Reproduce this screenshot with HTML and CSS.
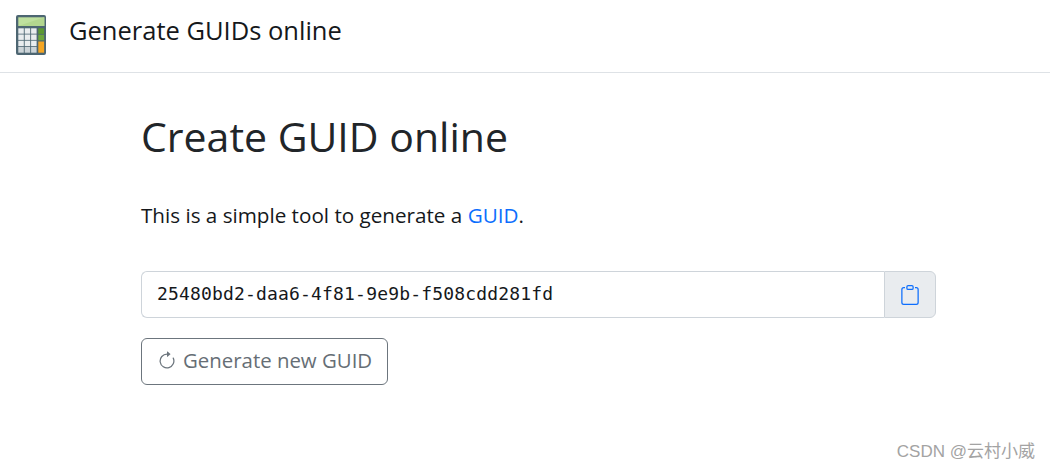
FILE: index.html
```html
<!DOCTYPE html>
<html lang="en">
<head>
  <title>Generate GUIDs online</title>
  <meta charset="UTF-8">
  <link rel="stylesheet" href="styles.css">
</head>
<body>
  <header class="topbar">
    <svg class="logo" viewBox="0 0 30 40" width="30" height="40">
      <rect x="0" y="0" width="30" height="40" rx="2" fill="#4d6672"/>
      <rect x="2.3" y="2.3" width="26" height="8.7" fill="#bfe09e"/>
      <path d="M2.3 11 L28.3 2.3 V11 Z" fill="#b3d78f"/>
      <g fill="#e9edef">
        <rect x="2.3" y="13.3" width="5.5" height="5.4"/><rect x="8.7" y="13.3" width="5.5" height="5.4"/><rect x="15.1" y="13.3" width="5.5" height="5.4"/>
        <rect x="2.3" y="19.5" width="5.5" height="5.4"/><rect x="8.7" y="19.5" width="5.5" height="5.4"/><rect x="15.1" y="19.5" width="5.5" height="5.4"/>
        <rect x="2.3" y="25.7" width="5.5" height="5.4"/><rect x="8.7" y="25.7" width="5.5" height="5.4"/><rect x="15.1" y="25.7" width="5.5" height="5.4"/>
      </g>
      <g fill="#ccd4d8">
        <rect x="2.3" y="31.9" width="5.5" height="5.8"/><rect x="8.7" y="31.9" width="5.5" height="5.8"/><rect x="15.1" y="31.9" width="5.5" height="5.8"/>
      </g>
      <rect x="22.3" y="13.3" width="5.8" height="5.6" fill="#5c9a32"/>
      <rect x="22.3" y="19.7" width="5.8" height="5.6" fill="#6fa83c"/>
      <rect x="22.3" y="26.5" width="5.8" height="11.2" fill="#f5a623"/>
    </svg>
    <span class="brand">Generate GUIDs online</span>
  </header>

  <main class="content">
    <h1 class="title">Create GUID online</h1>
    <p class="intro">This is a simple tool to generate a <a href="#">GUID</a>.</p>

    <div class="guid-group">
      <input class="guid-input" type="text" value="25480bd2-daa6-4f81-9e9b-f508cdd281fd" readonly>
      <button class="copy-btn" type="button">
        <svg viewBox="0 0 16 16" width="20" height="20" fill="#0d6efd">
          <path d="M4 1.5H3a2 2 0 0 0-2 2V14a2 2 0 0 0 2 2h10a2 2 0 0 0 2-2V3.5a2 2 0 0 0-2-2h-1v1h1a1 1 0 0 1 1 1V14a1 1 0 0 1-1 1H3a1 1 0 0 1-1-1V3.5a1 1 0 0 1 1-1h1v-1z"/>
          <path d="M9.5 1a.5.5 0 0 1 .5.5v1a.5.5 0 0 1-.5.5h-3a.5.5 0 0 1-.5-.5v-1a.5.5 0 0 1 .5-.5h3zm-3-1A1.5 1.5 0 0 0 5 1.5v1A1.5 1.5 0 0 0 6.5 4h3A1.5 1.5 0 0 0 11 2.5v-1A1.5 1.5 0 0 0 9.5 0h-3z"/>
        </svg>
      </button>
    </div>

    <button class="generate-btn" type="button">
      <svg viewBox="0 0 16 16" width="20" height="20" fill="#6c757d">
        <path fill-rule="evenodd" d="M8 3a5 5 0 1 0 4.546 2.914.5.5 0 0 1 .908-.417A6 6 0 1 1 8 2v1z"/>
        <path d="M8 4.466V.534a.25.25 0 0 1 .41-.192l2.36 1.966c.12.1.12.284 0 .384L8.41 4.658A.25.25 0 0 1 8 4.466z"/>
      </svg>
      <span class="generate-label">Generate new GUID</span>
    </button>
  </main>

  <div class="watermark">CSDN @云村小威</div>
</body>
</html>
```

FILE: styles.css
```css
* {
  box-sizing: border-box;
}

body {
  margin: 0;
  background-color: #fff;
  color: #212529;
  font-family: "Open Sans", "Noto Sans CJK SC", sans-serif;
  font-size: 20px;
  overflow: hidden;
}

.topbar {
  display: flex;
  align-items: center;
  height: 73px;
  padding: 0 0 2px 16px;
  border-bottom: 1px solid #dee2e6;
}

.logo {
  margin-right: 23px;
}

.brand {
  margin-top: -10px;
  font-size: 25.5px;
  color: #15181b;
}

.content {
  width: 795px;
  margin-left: 141px;
}

.title {
  margin: 35px 0 0;
  font-size: 41px;
  font-weight: 400;
  line-height: 56px;
}

.intro {
  margin: 36px 0 0;
  font-size: 20.65px;
  line-height: 30px;
  color: #15181b;
}

.intro a {
  color: #0d6efd;
  text-decoration: none;
}

.guid-group {
  display: flex;
  height: 47px;
  margin-top: 41px;
}

.guid-input {
  flex: 1;
  min-width: 0;
  padding: 0 15px 2px;
  border: 1px solid #ced4da;
  border-right: 0;
  border-radius: 6px 0 0 6px;
  color: #15181b;
  font-family: "DejaVu Sans Mono", monospace;
  font-size: 18px;
  letter-spacing: 0.17px;
  outline: none;
}

.copy-btn {
  display: flex;
  align-items: center;
  justify-content: center;
  width: 52px;
  padding: 0;
  border: 1px solid #ced4da;
  border-radius: 0 6px 6px 0;
  background-color: #e9ecef;
}

.generate-btn {
  display: flex;
  align-items: center;
  gap: 6px;
  height: 47px;
  margin-top: 20px;
  padding: 0 15px 2px;
  border: 1px solid #6c757d;
  border-radius: 6px;
  background-color: #fff;
  color: #666e75;
  font-family: inherit;
  font-size: 20.4px;
}

.generate-label {
  margin-top: -2px;
}

.watermark {
  position: absolute;
  right: 15px;
  top: 441px;
  color: #a3a3a3;
  font-size: 17px;
  line-height: 22px;
  font-family: "Liberation Sans", "Noto Sans CJK SC", sans-serif;
}
```
